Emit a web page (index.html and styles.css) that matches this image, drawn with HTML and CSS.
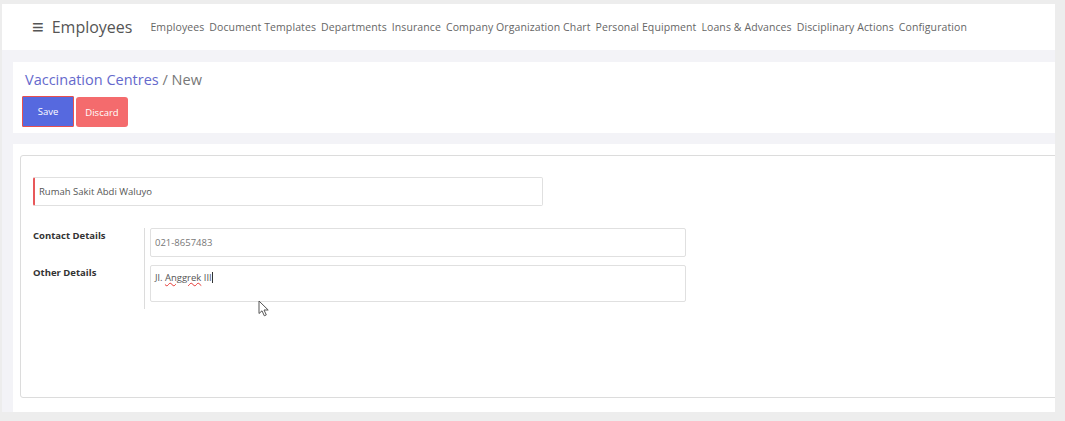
FILE: index.html
```html
<!DOCTYPE html>
<html lang="en">
<head>
  <meta charset="UTF-8" />
  <title>Vaccination Centres - New</title>
  <link rel="stylesheet" href="styles.css">
</head>
<body>
  <div class="app">
    <!-- Top menu -->
    <nav class="navbar">
      <span class="menu-toggle">&#8801;</span>
      <span class="app-name">Employees</span>
      <ul class="menu">
        <li>Employees</li>
        <li>Document Templates</li>
        <li>Departments</li>
        <li>Insurance</li>
        <li>Company Organization Chart</li>
        <li>Personal Equipment</li>
        <li>Loans &amp; Advances</li>
        <li>Disciplinary Actions</li>
        <li>Configuration</li>
      </ul>
    </nav>

    <div class="content">
      <!-- Control panel -->
      <div class="control-panel">
        <div class="breadcrumb"><span class="crumb-link">Vaccination Centres</span> / New</div>
        <div class="buttons">
          <button class="btn btn-save">Save</button>
          <button class="btn btn-discard">Discard</button>
        </div>
      </div>

      <!-- Form view -->
      <div class="form-view">
        <div class="sheet">
          <div class="name-field">Rumah Sakit Abdi Waluyo</div>

          <div class="details">
            <div class="label">Contact Details</div>
            <div class="field">
              <div class="input">021-8657483</div>
            </div>
            <div class="label">Other Details</div>
            <div class="field last">
              <div class="input textarea">Jl. <span class="misspelled">Anggrek</span> III<span class="caret"></span></div>
            </div>
          </div>
        </div>
      </div>
    </div>

    <svg class="pointer" width="12" height="17" viewBox="0 0 12 17">
      <path d="M1 1 L1 13.5 L4 10.8 L6.3 15.8 L8.3 14.9 L6 10 L10.2 10 Z" fill="#fff" stroke="#555" stroke-width="1" stroke-linejoin="round"/>
    </svg>
  </div>
</body>
</html>
```

FILE: styles.css
```css
* {
  box-sizing: border-box;
}

body {
  margin: 0;
  background: #ededed;
  font-family: 'Open Sans', sans-serif;
  color: #555;
}

.app {
  position: relative;
  width: 1053px;
  margin: 4px 0 0 2px;
}

.navbar {
  height: 46px;
  background: #fff;
  display: flex;
  align-items: center;
  padding-left: 30px;
}

.menu-toggle {
  font-size: 20px;
  color: #555;
  line-height: 1;
  margin-right: 8px;
}

.app-name {
  font-size: 16px;
  color: #555;
  margin-right: 18px;
}

.menu {
  list-style: none;
  margin: 0;
  padding: 0;
  display: flex;
  gap: 5px;
  font-size: 10.5px;
  letter-spacing: 0.1px;
  color: #666;
}

.content {
  background: #f3f3f7;
  padding: 12px 0 0 11px;
}

.control-panel {
  background: #fff;
  height: 71px;
  padding: 8px 0 0 12px;
}

.breadcrumb {
  font-size: 14.5px;
  color: #777;
  height: 26px;
}

.crumb-link {
  color: #6569cc;
}

.buttons {
  display: flex;
  gap: 2px;
  margin-left: -3px;
}

.btn {
  border: 0;
  border-radius: 3px;
  font-family: inherit;
  font-size: 9.5px;
  color: #fff;
  width: 52px;
  height: 31px;
  padding: 0;
}

.btn-save {
  background: #5669df;
  border: 1px solid #e8504f;
  border-radius: 1px;
}

.btn-discard {
  background: #f46b6d;
  height: 30px;
  margin-top: 1px;
}

.form-view {
  background: #fff;
  margin-top: 11px;
  height: 268px;
  padding: 11px 0 0 7px;
  overflow: hidden;
}

.sheet {
  width: 1100px;
  height: 243px;
  border: 1px solid #dcdcdc;
  border-radius: 3px;
  padding: 21px 0 0 12px;
}

.name-field {
  width: 510px;
  height: 29px;
  border: 1px solid #e0e0e0;
  border-left: 2px solid #e8585a;
  border-radius: 2px;
  font-size: 9.5px;
  color: #555;
  padding: 7px 0 0 4px;
}

.details {
  display: grid;
  grid-template-columns: 111px 542px;
  margin-top: 22px;
}

.label {
  font-size: 9.5px;
  font-weight: bold;
  color: #333;
  padding-top: 1px;
}

.field {
  border-left: 1px solid #dcdcdc;
  padding: 0 0 8px 5px;
}

.field.last {
  padding-bottom: 7px;
}

.input {
  width: 536px;
  height: 29px;
  border: 1px solid #e0e0e0;
  border-radius: 2px;
  font-size: 9.5px;
  color: #777;
  padding: 7px 0 0 4px;
}

.input.textarea {
  height: 37px;
  padding-top: 5px;
  color: #555;
}

.misspelled {
  text-decoration: underline wavy #e53935;
  text-decoration-thickness: 1px;
}

.caret {
  display: inline-block;
  width: 1px;
  height: 11px;
  background: #333;
  vertical-align: -2px;
}

.pointer {
  position: absolute;
  left: 256px;
  top: 296px;
}
```
